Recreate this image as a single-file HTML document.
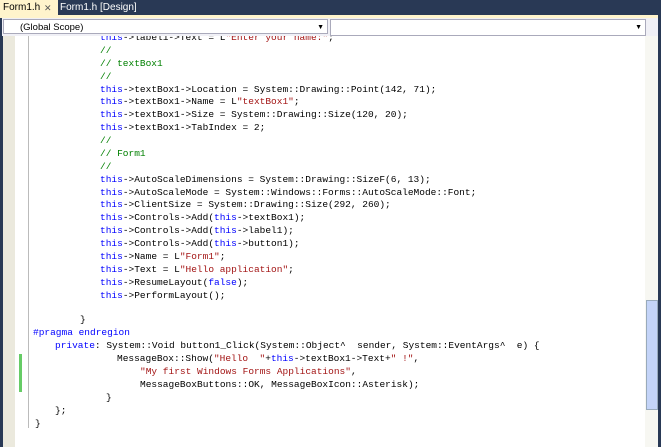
<!DOCTYPE html>
<html><head><style>
body{margin:0;width:661px;height:447px;overflow:hidden;background:#293955;position:relative;font-family:"Liberation Sans",sans-serif}
.tab1{position:absolute;left:0;top:0;width:55px;height:16px;background:#fff4cc;font-size:10px;line-height:16px;padding-left:3px;color:#000}
.tab1 span{position:absolute;left:44px;color:#555;font-size:9px}
.tab2{position:absolute;left:60px;top:0;font-size:10px;line-height:16px;color:#fff}
.strip{position:absolute;left:0;top:15px;width:658px;height:3px;background:#fff4cc}
.bar{position:absolute;left:2px;top:18px;width:656px;height:18px;background:#f0f0f6}
.dd{position:absolute;top:1px;height:15px;border:1px solid #aab;background:#fff;font-size:9.5px;line-height:15px}
.ed{position:absolute;left:3px;top:36px;width:642px;height:411px;background:#fff;overflow:hidden}
.mg{position:absolute;left:0;top:0;width:12px;height:411px;background:#ebe9dd}
.ol{position:absolute;left:25px;top:0;width:1px;height:392px;background:#bbb}
pre{position:absolute;left:97px;top:-4px;margin:0;font-family:"Liberation Mono",monospace;font-size:9.5px;line-height:12.87px;color:#000}
.l{position:absolute;font-family:"Liberation Mono",monospace;font-size:9.5px;line-height:12.87px;white-space:pre;color:#000}
.k{color:#0000ff}.s{color:#a31515}.c{color:#008000}
.sb{position:absolute;left:645px;top:36px;width:13px;height:411px;background:#f7f7f2}
.th{position:absolute;left:646px;top:300px;width:10px;height:108px;background:#c4d4f8;border:1px solid #9ab}
.green{position:absolute;left:16px;top:318px;width:3px;height:38px;background:#6c6}
</style></head><body>
<div class="tab1">Form1.h<span>✕</span></div>
<div class="tab2">Form1.h [Design]</div>
<div class="strip"></div>
<div class="bar">
<div class="dd" style="left:1px;width:325px;padding-left:16px;box-sizing:border-box">(Global Scope)<span style="position:absolute;right:3px;font-size:7px">▼</span></div>
<div class="dd" style="left:328px;width:314px"><span style="position:absolute;right:3px;font-size:7px">▼</span></div>
</div>
<div class="ed">
<div class="mg"></div><div class="ol"></div>
<div class="green"></div>
<pre><span class="k">this</span>-&gt;label1-&gt;Text = L<span class="s">"Enter your name:"</span>;
<span class="c">//</span>
<span class="c">// textBox1</span>
<span class="c">//</span>
<span class="k">this</span>-&gt;textBox1-&gt;Location = System::Drawing::Point(142, 71);
<span class="k">this</span>-&gt;textBox1-&gt;Name = L<span class="s">"textBox1"</span>;
<span class="k">this</span>-&gt;textBox1-&gt;Size = System::Drawing::Size(120, 20);
<span class="k">this</span>-&gt;textBox1-&gt;TabIndex = 2;
<span class="c">//</span>
<span class="c">// Form1</span>
<span class="c">//</span>
<span class="k">this</span>-&gt;AutoScaleDimensions = System::Drawing::SizeF(6, 13);
<span class="k">this</span>-&gt;AutoScaleMode = System::Windows::Forms::AutoScaleMode::Font;
<span class="k">this</span>-&gt;ClientSize = System::Drawing::Size(292, 260);
<span class="k">this</span>-&gt;Controls-&gt;Add(<span class="k">this</span>-&gt;textBox1);
<span class="k">this</span>-&gt;Controls-&gt;Add(<span class="k">this</span>-&gt;label1);
<span class="k">this</span>-&gt;Controls-&gt;Add(<span class="k">this</span>-&gt;button1);
<span class="k">this</span>-&gt;Name = L<span class="s">"Form1"</span>;
<span class="k">this</span>-&gt;Text = L<span class="s">"Hello application"</span>;
<span class="k">this</span>-&gt;ResumeLayout(<span class="k">false</span>);
<span class="k">this</span>-&gt;PerformLayout();</pre>
<div class="l" style="left:77px;top:278px">}</div>
<div class="l" style="left:30px;top:291px"><span class="k">#pragma endregion</span></div>
<div class="l" style="left:52px;top:304px"><span class="k">private</span>: System::Void button1_Click(System::Object^  sender, System::EventArgs^  e) {</div>
<div class="l" style="left:114px;top:317px">MessageBox::Show(<span class="s">"Hello  "</span>+<span class="k">this</span>-&gt;textBox1-&gt;Text+<span class="s">" !"</span>,</div>
<div class="l" style="left:137px;top:330px"><span class="s">"My first Windows Forms Applications"</span>,</div>
<div class="l" style="left:137px;top:343px">MessageBoxButtons::OK, MessageBoxIcon::Asterisk);</div>
<div class="l" style="left:103px;top:356px">}</div>
<div class="l" style="left:52px;top:369px">};</div>
<div class="l" style="left:32px;top:382px">}</div>
</div>
<div class="sb"></div><div class="th"></div>
</body></html>
